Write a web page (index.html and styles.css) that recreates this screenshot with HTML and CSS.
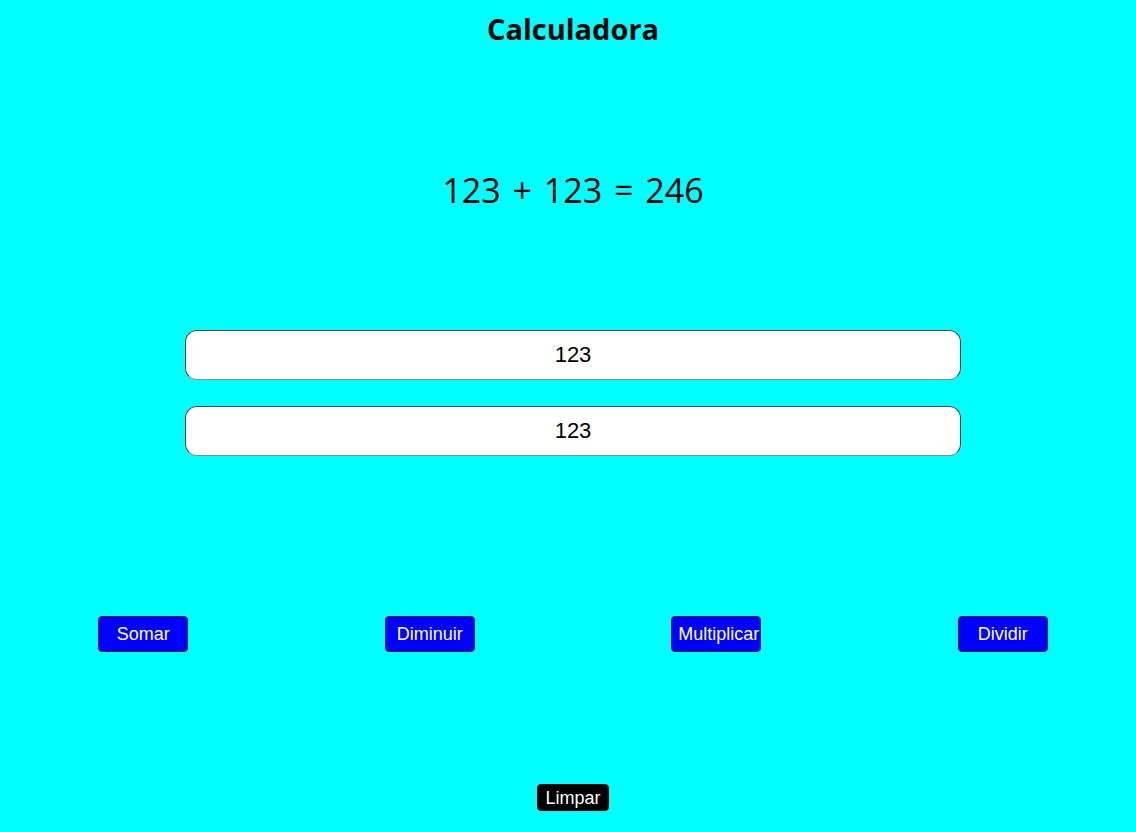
FILE: index.html
```html
<!DOCTYPE html>
<html lang="pt">
<head>
<meta charset="utf-8">
<title>Calculadora</title>
<link rel="stylesheet" href="styles.css">
</head>
<body>
<div class="app">
  <h1 class="title">Calculadora</h1>
  <div class="result">123 + 123 = 246</div>
  <div class="inputs">
    <input class="field" type="text" value="123">
    <input class="field" type="text" value="123">
  </div>
  <div class="ops">
    <button class="op">Somar</button>
    <button class="op">Diminuir</button>
    <button class="op">Multiplicar</button>
    <button class="op">Dividir</button>
  </div>
  <div class="clear-row">
    <button class="clear">Limpar</button>
  </div>
</div>
</body>
</html>
```

FILE: styles.css
```css
html, body {
  margin: 0;
  padding: 0;
  background: #00ffff;
  overflow: hidden;
}

.app {
  width: 1146px;
  height: 832px;
  display: flex;
  flex-direction: column;
  align-items: center;
}

.title {
  margin: 0;
  height: 57px;
  line-height: 58px;
  font-family: "Open Sans", "Noto Sans", sans-serif;
  font-weight: 700;
  font-size: 29px;
  color: #000;
}

.result {
  margin-top: 105px;
  height: 56px;
  line-height: 56px;
  font-family: "Open Sans", "Noto Sans", sans-serif;
  font-size: 34px;
  word-spacing: 3px;
  color: #000;
}

.inputs {
  margin-top: 112px;
  display: flex;
  flex-direction: column;
  gap: 26px;
}

.field {
  box-sizing: border-box;
  width: 776px;
  height: 50px;
  margin: 0;
  padding: 0 10px;
  border: 1px solid #4a4a4a;
  border-bottom-color: #8a8a8a;
  border-radius: 12px;
  background: #fff;
  text-align: center;
  font-family: "Liberation Sans", Arial, sans-serif;
  font-size: 22px;
  color: #000;
}

.ops {
  margin-top: 160px;
  align-self: stretch;
  display: flex;
  justify-content: space-around;
}

.op {
  box-sizing: border-box;
  width: 90px;
  height: 36px;
  padding: 1px 6px;
  border: 1px solid #1a1a3a;
  border-radius: 4px;
  background: #0000ff;
  color: #fff;
  font-family: "Liberation Sans", Arial, sans-serif;
  font-size: 18px;
  white-space: nowrap;
}

.clear-row {
  margin-top: 132px;
  display: flex;
  justify-content: center;
}

.clear {
  box-sizing: border-box;
  height: 27px;
  padding: 0 7.5px;
  border: 1px solid #000;
  border-radius: 4px;
  background: #000;
  color: #fff;
  font-family: "Liberation Sans", Arial, sans-serif;
  font-size: 18px;
  line-height: 24px;
}
```
